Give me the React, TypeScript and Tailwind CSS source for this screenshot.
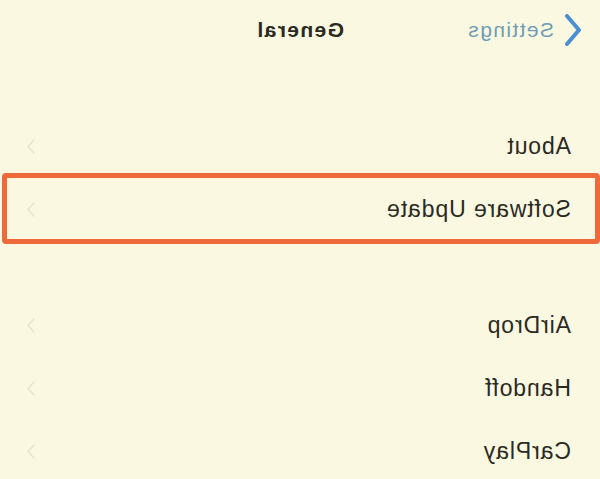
import React from "react";

const font = { fontFamily: '"Liberation Sans", Arial, sans-serif' };

function Chevron() {
  return (
    <svg width="8" height="15" viewBox="0 0 8 15" className="shrink-0">
      <polyline
        points="1,1 7,7.5 1,14"
        fill="none"
        stroke="#e5e3cd"
        strokeWidth="1.5"
        strokeLinecap="round"
        strokeLinejoin="round"
      />
    </svg>
  );
}

function Row({ label }: { label: string }) {
  return (
    <div className="flex items-center justify-between h-[63px] pl-[29px] pr-[27px]">
      <span className="text-[23px] tracking-[0.9px] text-[#2b2a22]">{label}</span>
      <Chevron />
    </div>
  );
}

export default function App() {
  return (
    <div
      className="w-[600px] h-[479px] overflow-hidden bg-[#fbf8e2] -scale-x-100"
      style={font}
    >
      <div className="relative flex items-center h-[60px]">
        <div className="flex items-center pl-[18px] gap-[10px]">
          <svg width="18" height="32" viewBox="0 0 18 32">
            <polyline
              points="15,2 3,16 15,30"
              fill="none"
              stroke="#4b8fd0"
              strokeWidth="4"
              strokeLinecap="round"
              strokeLinejoin="round"
            />
          </svg>
          <span className="text-[21px] tracking-[1.4px] text-[#6f9db3]">Settings</span>
        </div>
        <span className="absolute left-0 right-0 text-center text-[21px] font-bold tracking-[1.4px] text-[#2b2a22] pointer-events-none">
          General
        </span>
      </div>

      <div className="mt-[55px]">
        <Row label="About" />
        <div className="relative">
          <Row label="Software Update" />
          <div className="absolute top-[-5px] bottom-[-3px] left-0 right-[2px] border-[5px] border-[#ef6a3b] rounded-[4px]" />
        </div>
      </div>

      <div className="mt-[53px]">
        <Row label="AirDrop" />
        <Row label="Handoff" />
        <Row label="CarPlay" />
      </div>
    </div>
  );
}
